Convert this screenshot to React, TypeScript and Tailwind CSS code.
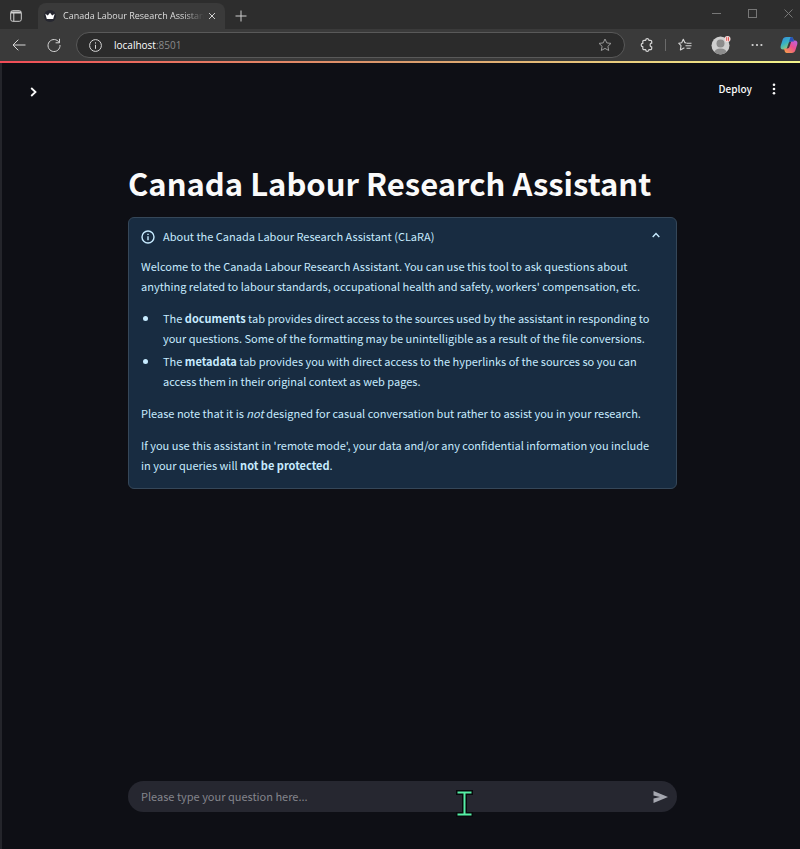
import React from "react";

const copilotWings = (
  <svg viewBox="0 0 20 20" className="h-[18px] w-[18px]" aria-hidden="true">
    <defs>
      <linearGradient id="wingBlue" x1="0" y1="0" x2="0.6" y2="1">
        <stop offset="0" stopColor="#3a86e0" />
        <stop offset="0.5" stopColor="#35b3c4" />
        <stop offset="1" stopColor="#a6d06a" />
      </linearGradient>
      <linearGradient id="wingPink" x1="1" y1="0" x2="0.2" y2="1">
        <stop offset="0" stopColor="#b565ea" />
        <stop offset="0.5" stopColor="#ec4f8f" />
        <stop offset="1" stopColor="#f59a4c" />
      </linearGradient>
    </defs>
    <path d="M7 1h5.5c1.600 0 2 1.200 2.500 2.800L15.500 6H12c-1.500 0-2.200 1-2.700 2.500L7.800 13c-.5 1.500-1.200 2-2.600 2H3.500C1 15 .2 13 .8 10.800L3 3.800C3.600 2 4.800 1 7 1z" fill="url(#wingBlue)" />
    <path d="M13 19H7.500C6 19 5.400 17.800 5 16.200L4.500 14H8c1.500 0 2.200-1 2.700-2.500L12.200 7c.5-1.500 1.200-2 2.600-2h1.700c2.500 0 3.300 2 2.700 4.200l-2.200 7C16.400 18 15.200 19 13 19z" fill="url(#wingPink)" />
    <path d="M12.500 1c1.600 0 2 1.200 2.500 2.800L15.500 6H12c-1 0-1.700.4-2.200 1.200L11 3c.3-1.200.7-2 1.500-2z" fill="#2950b8" />
  </svg>
);

function TabStrip() {
  return (
    <div className="flex h-[29px] items-stretch bg-[#2d2d2d] text-[#d0d0d0]">
      <button aria-label="Tab actions" className="flex w-[38px] items-center pt-[3px] pl-[10px]">
        <svg viewBox="0 0 12 12" className="h-3 w-3" fill="none" stroke="currentColor">
          <rect x="0.700" y="0.700" width="10.600" height="10.600" rx="2" />
          <path d="M1 2.500h10" strokeWidth="2" />
          <path d="M3.800 3v8" />
        </svg>
      </button>
      <div className="mt-[3px] flex w-[187px] items-center rounded-t-lg bg-[#3a3a3a] pl-[6px]">
        <svg viewBox="0 0 12 12" className="h-3 w-3 shrink-0" aria-hidden="true">
          <circle cx="6" cy="6" r="6" fill="#262730" />
          <path d="M1.300 3.800l2.500 1.600L6 2.800l2.200 2.600 2.500-1.600L9.200 9H2.800z" fill="#fff" />
        </svg>
        <span className="ml-[7px] w-[141px] shrink-0 overflow-hidden whitespace-nowrap font-['Open_Sans',sans-serif] text-[9px] leading-4 text-[#dedede] [mask-image:linear-gradient(to_right,black_85%,transparent)]">
          Canada Labour Research Assistant
        </span>
        <button aria-label="Close tab" className="ml-1">
          <svg viewBox="0 0 8 8" className="h-2 w-2" fill="none" stroke="currentColor">
            <path d="M1 1l6 6M7 1L1 7" />
          </svg>
        </button>
      </div>
      <button aria-label="New tab" className="ml-[10px] pt-[3px]">
        <svg viewBox="0 0 12 12" className="h-3 w-3" fill="none" stroke="currentColor">
          <path d="M6 .5v11M.5 6h11" />
        </svg>
      </button>
      <div className="ml-auto flex items-center gap-[27px] pr-[7px] pb-[2px] text-[#777]">
        <button aria-label="Minimize">
          <svg viewBox="0 0 9 9" className="h-[9px] w-[9px]" fill="none" stroke="currentColor">
            <path d="M0 4.500h9" />
          </svg>
        </button>
        <button aria-label="Maximize">
          <svg viewBox="0 0 9 9" className="h-[9px] w-[9px]" fill="none" stroke="currentColor">
            <rect x="0.500" y="0.500" width="8" height="8" />
          </svg>
        </button>
        <button aria-label="Close window">
          <svg viewBox="0 0 9 9" className="h-[9px] w-[9px]" fill="none" stroke="currentColor">
            <path d="M.5.5l8 8M8.500.5l-8 8" />
          </svg>
        </button>
      </div>
    </div>
  );
}

function Toolbar() {
  return (
    <div className="flex h-8 items-center bg-[#3a3a3a] text-[#d6d6d6]">
      <button aria-label="Back" className="ml-3">
        <svg viewBox="0 0 14 12" className="h-3 w-[14px]" fill="none" stroke="currentColor">
          <path d="M13.500 6H1M6.300.7L1 6l5.300 5.300" />
        </svg>
      </button>
      <button aria-label="Refresh" className="ml-[21px]">
        <svg viewBox="0 0 14 14" className="h-[14px] w-[14px]" fill="none" stroke="currentColor">
          <path d="M12.200 4.500A6 6 0 1 0 13 7M12.500.8v4H8.600" />
        </svg>
      </button>
      <div className="ml-[15px] flex h-[26px] min-w-0 flex-1 items-center rounded-full border border-[#595959] bg-[#2b2b2b] pr-3 pl-3">
        <svg viewBox="0 0 13 13" className="h-[13px] w-[13px] shrink-0" fill="none" stroke="currentColor" aria-hidden="true">
          <circle cx="6.500" cy="6.500" r="5.900" />
          <path d="M6.500 5.800v4M6.500 3.300v1.300" />
        </svg>
        <span className="ml-3 flex-1 font-['Open_Sans',sans-serif] text-[10px] leading-4 text-[#8a8a8a]">
          <span className="text-white">localhost</span>:8501
        </span>
        <button aria-label="Add to favorites" className="text-[#999]">
          <svg viewBox="0 0 14 14" className="h-[14px] w-[14px]" fill="none" stroke="currentColor" strokeLinejoin="round">
            <path d="M7 1l1.800 3.900 4.200.5-3.100 2.900.8 4.200L7 10.400l-3.700 2.100.8-4.200L1 5.400l4.200-.5z" />
          </svg>
        </button>
      </div>
      <button aria-label="Extensions" className="ml-[15px]">
        <svg viewBox="0 0 14 14" className="h-[14px] w-[14px]" fill="none" stroke="currentColor" strokeWidth="1.200" strokeLinejoin="round">
          <path d="M4 2.300h1.700a1.600 1.600 0 0 1 3.200 0h1.600a1.200 1.200 0 0 1 1.200 1.200v1.700a1.500 1.500 0 0 0-1.500 1.800 1.500 1.500 0 0 0 1.500 1.800v1.700a1.200 1.200 0 0 1-1.200 1.200H8.900a1.600 1.600 0 0 1-3.200 0H4a1.200 1.200 0 0 1-1.200-1.200V8.600a1.600 1.600 0 0 1 0-3.200V3.500A1.200 1.200 0 0 1 4 2.300z" />
        </svg>
      </button>
      <span className="ml-[11px] h-3 w-px bg-[#6a6a6a]" />
      <button aria-label="Favorites" className="ml-[12px]">
        <svg viewBox="0 0 14 14" className="h-[14px] w-[14px]" fill="none" stroke="currentColor" strokeWidth="1.100" strokeLinejoin="round">
          <path d="M8.200 4.900L6.900 4.700 5.300 1.300 3.700 4.700.7 5.200l2.300 2.500-.6 4.200 4-2.100M8.500 5.200h5M7.500 7.700h6M8.500 10.200h4" />
        </svg>
      </button>
      <button aria-label="Profile" className="ml-[19px]">
        <svg viewBox="0 0 20 20" className="h-5 w-5">
          <defs>
            <clipPath id="avatar"><circle cx="9.500" cy="10.500" r="9" /></clipPath>
          </defs>
          <circle cx="9.500" cy="10.500" r="9" fill="#cfcfcf" />
          <g clipPath="url(#avatar)" fill="#8c8c8c">
            <circle cx="9.500" cy="8.500" r="4" />
            <ellipse cx="9.500" cy="18" rx="6.500" ry="4.500" />
          </g>
          <circle cx="16.500" cy="4" r="3" fill="#f3dcdc" />
          <path d="M15.700 2.200v3.600M17.500 2.200v3.600" stroke="#e0524f" />
        </svg>
      </button>
      <button aria-label="Settings and more" className="ml-[20px]">
        <svg viewBox="0 0 12 4" className="h-1 w-3" fill="currentColor">
          <circle cx="1.600" cy="2" r="1.100" />
          <circle cx="6" cy="2" r="1.100" />
          <circle cx="10.400" cy="2" r="1.100" />
        </svg>
      </button>
      <button aria-label="Copilot" className="mr-[2px] ml-[17px]">{copilotWings}</button>
    </div>
  );
}

const bullet =
  "flex before:mt-2 before:mr-[15px] before:ml-[2px] before:h-[5px] before:w-[5px] before:shrink-0 before:rounded-full before:bg-current before:content-['']";

function AboutCard() {
  return (
    <details open className="mt-3 rounded-md border border-[#354759] bg-[#182c41] pr-4 pb-[13px] pl-3 text-[11px] leading-5 text-[#c7ebff]">
      <summary className="flex list-none items-center pt-2">
        <svg viewBox="0 0 14 14" className="mt-px h-[14px] w-[14px]" fill="none" stroke="currentColor" strokeWidth="1.400" aria-hidden="true">
          <circle cx="7" cy="7" r="6" />
          <path d="M7 6.200v4M7 3.700v1.400" />
        </svg>
        <span className="ml-2 flex-1">About the Canada Labour Research Assistant (CLaRA)</span>
        <svg viewBox="0 0 8 6" className="mb-[2px] h-[6px] w-2" fill="none" stroke="currentColor" strokeWidth="1.400" aria-hidden="true">
          <path d="M.7 5L4 1.500 7.300 5" />
        </svg>
      </summary>
      <p className="mt-[10px]">
        Welcome to the Canada Labour Research Assistant. You can use this tool to ask questions about
        anything related to labour standards, occupational health and safety, workers' compensation, etc.
      </p>
      <ul className="mt-3 flex flex-col gap-[3px]">
        <li className={bullet}>
          <p>
            The <strong>documents</strong> tab provides direct access to the sources used by the assistant in
            responding to your questions. Some of the formatting may be unintelligible as a result of the file
            conversions.
          </p>
        </li>
        <li className={bullet}>
          <p>
            The <strong>metadata</strong> tab provides you with direct access to the hyperlinks of the sources so
            you can access them in their original context as web pages.
          </p>
        </li>
      </ul>
      <p className="mt-3">
        Please note that it is <em>not</em> designed for casual conversation but rather to assist you in your
        research.
      </p>
      <p className="mt-3">
        If you use this assistant in 'remote mode', your data and/or any confidential information you include in
        your queries will <strong>not be protected</strong>.
      </p>
    </details>
  );
}

function ChatInput() {
  return (
    <form className="relative mt-auto flex h-[31px] items-center rounded-full bg-[#262730] pr-[9px] pl-[13px]" onSubmit={(e) => e.preventDefault()}>
      <input
        type="text"
        aria-label="Your question"
        placeholder="Please type your question here..."
        className="h-5 min-w-0 flex-1 bg-transparent pb-[2px] text-[11px] text-white outline-none placeholder:text-[#84858c]"
      />
      <button aria-label="Send" className="text-[#a5a7b0]">
        <svg viewBox="0 0 15 12" className="h-3 w-[15px]" fill="currentColor">
          <path d="M.5 0L15 6 .5 12V7.500L7 6 .5 4.500z" />
        </svg>
      </button>
      <svg viewBox="0 0 17 27" className="pointer-events-none absolute top-[9px] left-[328px] h-[27px] w-[17px]" aria-hidden="true">
        <path d="M0 0h17v5h-6v17h6v5H0v-5h6V5H0z" fill="#08090c" />
        <path d="M1.500 2.500h14M1.500 24.500h14M8.500 2.500v22" stroke="#55f0a5" strokeWidth="2" />
      </svg>
    </form>
  );
}

export default function App() {
  return (
    <div className="flex min-h-screen flex-col bg-[#0e0f15] font-['Noto_Sans_CJK_SC',sans-serif]">
      <TabStrip />
      <Toolbar />
      <div className="h-[2px] bg-linear-to-r from-[#f04b57] via-[#d99a6c] to-[#f3f58c]" />
      <div className="flex flex-1 flex-col border-l-2 border-[#24252b]">
        <header className="flex h-[52px] items-center justify-between pr-6 pl-7 text-[#fafafa]">
          <button aria-label="Open sidebar" className="mt-[5px]">
            <svg viewBox="0 0 7 10" className="h-[10px] w-[7px]" fill="none" stroke="currentColor" strokeWidth="1.800">
              <path d="M1.200 1L5.500 5 1.200 9" />
            </svg>
          </button>
          <div className="flex items-center gap-5">
            <button className="text-[10px] leading-5 font-medium">Deploy</button>
            <button aria-label="Main menu">
              <svg viewBox="0 0 4 12" className="h-3 w-1" fill="currentColor">
                <circle cx="2" cy="1.700" r="1.300" />
                <circle cx="2" cy="6" r="1.300" />
                <circle cx="2" cy="10.300" r="1.300" />
              </svg>
            </button>
          </div>
        </header>
        <div className="flex w-full flex-1 flex-col pl-[3px]">
          <main className="mx-auto flex w-full max-w-[549px] flex-1 flex-col pt-[46px] pb-[37px]">
            <h1 className="text-[31px] leading-[44px] font-bold text-[#fafafa]">Canada Labour Research Assistant</h1>
            <AboutCard />
            <ChatInput />
          </main>
        </div>
      </div>
    </div>
  );
}
